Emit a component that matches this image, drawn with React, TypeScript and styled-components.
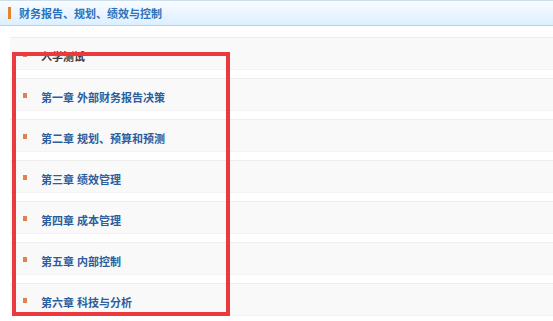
import styled, { createGlobalStyle } from "styled-components"

const GlobalStyle = createGlobalStyle`
  html, body {
    margin: 0;
    padding: 0;
    background: #ffffff;
    font-family: "Liberation Sans", "Noto Sans CJK SC", sans-serif;
    overflow: hidden;
  }
`

const Page = styled.div`
  position: relative;
  width: 553px;
  height: 321px;
  overflow: hidden;
`

const Header = styled.div`
  height: 24px;
  display: flex;
  align-items: center;
  gap: 8px;
  padding-left: 8px;
  border-top: 1px solid #cddfeb;
  border-bottom: 1px solid #b9d3e5;
  background: linear-gradient(to bottom, #f9fcff 0%, #ecf6ff 45%, #dcefff 100%);
`

const HeaderMark = styled.span`
  width: 3px;
  height: 12px;
  background: #e8842c;
`

const Title = styled.h1`
  margin: 0;
  font-size: 11px;
  font-weight: bold;
  color: #2a72bb;
`

const List = styled.ul`
  list-style: none;
  margin: 11px 0 0 10px;
  padding: 0;
  display: flex;
  flex-direction: column;
  gap: 8px;
`

const Row = styled.li`
  height: 33px;
  box-sizing: border-box;
  display: flex;
  align-items: center;
  padding: 4px 0 0 13px;
  border-top: 1px solid #eeeeee;
  border-bottom: 1px solid #f3f3f3;
  background: #f9f9f9;
`

const Bullet = styled.span`
  width: 4px;
  height: 5px;
  margin-top: -3px;
  background: #e2804f;
  flex-shrink: 0;
`

const Label = styled.a<{ $dark?: boolean }>`
  margin-left: 14px;
  font-size: 11px;
  font-weight: bold;
  color: ${(p) => (p.$dark ? "#3a3a3a" : "#2c5e9d")};
  text-decoration: none;
  white-space: nowrap;
`

const Highlight = styled.div`
  position: absolute;
  left: 12px;
  top: 52px;
  width: 218px;
  height: 264px;
  box-sizing: border-box;
  border: 4.5px solid #ea3a3d;
  pointer-events: none;
`

const items = [
  "入学测试",
  "第一章 外部财务报告决策",
  "第二章 规划、预算和预测",
  "第三章 绩效管理",
  "第四章 成本管理",
  "第五章 内部控制",
  "第六章 科技与分析",
]

export default function App() {
  return (
    <Page>
      <GlobalStyle />
      <Header>
        <HeaderMark />
        <Title>财务报告、规划、绩效与控制</Title>
      </Header>
      <List>
        {items.map((text, i) => (
          <Row key={text}>
            <Bullet />
            <Label $dark={i === 0}>{text}</Label>
          </Row>
        ))}
      </List>
      <Highlight />
    </Page>
  )
}
